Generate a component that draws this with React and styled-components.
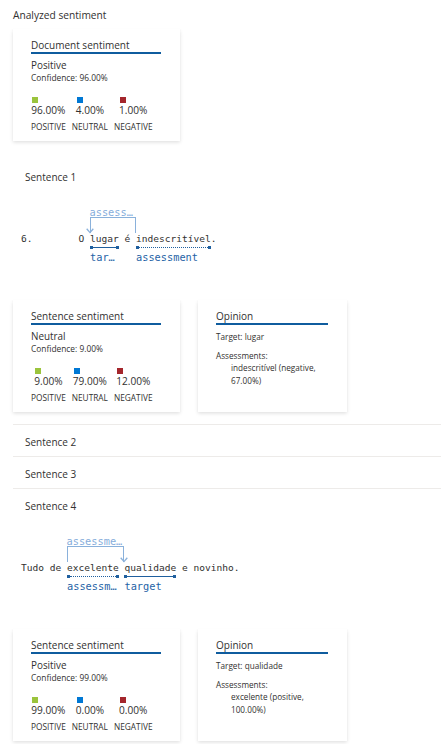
import React from 'react';
import styled, { createGlobalStyle } from 'styled-components';

const GlobalStyle = createGlobalStyle`
  body {
    margin: 0;
    background: #ffffff;
    color: #323130;
    font-family: "Open Sans", Lato, sans-serif;
    overflow: hidden;
  }
`;

const Page = styled.div`
  padding: 7px 0 0 13px;
`;

const PageTitle = styled.div`
  font-size: 10.2px;
  line-height: 16px;
`;

const Card = styled.div`
  box-sizing: border-box;
  width: ${props => props.$width}px;
  height: 112px;
  margin-top: ${props => props.$top || 0}px;
  padding: 9px 19px 8px 18px;
  background: #ffffff;
  box-shadow: 0 1.6px 3.6px rgba(0, 0, 0, 0.13), 0 0.3px 0.9px rgba(0, 0, 0, 0.11);
`;

const CardTitle = styled.div`
  font-size: 10px;
  line-height: 14px;
  border-bottom: 2px solid #0f5c9e;
`;

const Label = styled.div`
  margin-top: 4px;
  font-size: 9.9px;
  line-height: 14px;
`;

const Confidence = styled.div`
  font-size: 8.4px;
  line-height: 12px;
`;

const Scores = styled.div`
  display: flex;
  gap: 6px;
  margin-top: 13px;
`;

const ScoreCol = styled.div`
  display: flex;
  flex-direction: column;
  align-items: center;
`;

const ScoreValue = styled.div`
  display: flex;
  flex-direction: column;
  align-items: flex-start;
  font-size: 10.1px;
  line-height: 14px;
`;

const Swatch = styled.span`
  width: 6px;
  height: 6px;
  margin-left: 1px;
  background: ${props => props.$color};
`;

const ScoreName = styled.div`
  margin-top: 4px;
  font-size: 8.3px;
  line-height: 12px;
  text-transform: uppercase;
`;

const OpinionLine = styled.div`
  margin-top: ${props => props.$top}px;
  padding-left: ${props => (props.$indent ? 15 : 0)}px;
  font-size: 8.2px;
  line-height: 12.5px;
`;

const Sentences = styled.div`
  margin-top: 19px;
`;

const Item = styled.div`
  border-top: ${props => (props.$first ? 'none' : '1px solid #edebe9')};
`;

const ItemHeader = styled.div`
  height: 28px;
  padding: 3px 0 0 12px;
  font-size: 10px;
  line-height: 28px;
`;

const Panel = styled.div`
  padding-bottom: 12px;
`;

const AnnotLine = styled.div`
  padding: 41px 0 37px 8px;
  font-family: "DejaVu Sans Mono", monospace;
  font-size: 9.55px;
  line-height: 14px;
  color: #323130;
  white-space: pre;
`;

const Word = styled.span`
  display: inline-flex;
  flex-direction: column;
`;

const Bar = styled.span`
  display: flex;
  align-items: center;
  height: 3px;
  margin-bottom: 2px;
`;

const BarEnd = styled.span`
  width: 3px;
  height: 3px;
  background: #1f5f9e;
`;

const BarLine = styled.span`
  flex: 1;
  border-top: 1.2px ${props => (props.$dotted ? 'dotted' : 'solid')} #1f5f9e;
`;

const WordLabel = styled.span`
  width: 0;
  min-width: 100%;
  overflow: hidden;
  text-overflow: ellipsis;
  white-space: nowrap;
  font-size: 10.3px;
  line-height: 12px;
  color: #1f63a6;
`;

const ArcSpan = styled.span`
  position: relative;
  display: inline-block;
`;

const Arc = styled.span`
  position: absolute;
  left: 0;
  right: 0;
  top: -15px;
  height: 15px;
  border: 1.5px solid #8ab1db;
  border-bottom: none;
`;

const ArcLabel = styled.span`
  position: absolute;
  left: -1.5px;
  right: -1.5px;
  bottom: 100%;
  overflow: hidden;
  text-overflow: ellipsis;
  white-space: nowrap;
  font-size: 10.3px;
  line-height: 12px;
  color: #86addb;
`;

const ArrowHead = styled.svg`
  position: absolute;
  bottom: -1px;
  ${props => (props.$side === 'left' ? 'left: -5px;' : 'right: -5px;')}
`;

const CardsRow = styled.div`
  display: flex;
  gap: 18px;
`;

const AnnotatedWord = ({ text, label, dotted }) => (
  <Word>
    <span>{text}</span>
    <Bar>
      <BarEnd />
      <BarLine $dotted={dotted} />
      <BarEnd />
    </Bar>
    <WordLabel>{label}</WordLabel>
  </Word>
);

const Link = ({ label, target, children }) => (
  <ArcSpan>
    <Arc>
      <ArcLabel>{label}</ArcLabel>
      <ArrowHead $side={target} width="8" height="6" viewBox="0 0 8 6">
        <path d="M0.7 0.8 L4 4.6 L7.3 0.8" fill="none" stroke="#8ab1db" strokeWidth="1.3" />
      </ArrowHead>
    </Arc>
    {children}
  </ArcSpan>
);

const SentimentCard = ({ title, label, confidence, scores, top }) => (
  <Card $width={167} $top={top}>
    <CardTitle>{title}</CardTitle>
    <Label>{label}</Label>
    <Confidence>Confidence: {confidence}</Confidence>
    <Scores>
      {scores.map(s => (
        <ScoreCol key={s.name}>
          <ScoreValue>
            <Swatch $color={s.color} />
            <span>{s.value}</span>
          </ScoreValue>
          <ScoreName>{s.name}</ScoreName>
        </ScoreCol>
      ))}
    </Scores>
  </Card>
);

const OpinionCard = ({ target, assessment }) => (
  <Card $width={149}>
    <CardTitle>Opinion</CardTitle>
    <OpinionLine $top={6}>Target: {target}</OpinionLine>
    <OpinionLine $top={6}>Assessments:</OpinionLine>
    <OpinionLine $top={0} $indent>{assessment}</OpinionLine>
  </Card>
);

const colors = ['#9bc43c', '#0078d4', '#a4262c'];
const names = ['Positive', 'Neutral', 'Negative'];
const makeScores = values => values.map((value, i) => ({ name: names[i], value, color: colors[i] }));

const App = () => (
  <Page>
    <GlobalStyle />
    <PageTitle>Analyzed sentiment</PageTitle>
    <SentimentCard
      top={6}
      title="Document sentiment"
      label="Positive"
      confidence="96.00%"
      scores={makeScores(['96.00%', '4.00%', '1.00%'])}
    />

    <Sentences>
      <Item $first>
        <ItemHeader>Sentence 1</ItemHeader>
        <Panel>
          <AnnotLine>
            {'6.        O '}
            <Link label="assessment" target="left">
              <AnnotatedWord text="lugar" label="target" />
              {' é '}
            </Link>
            <AnnotatedWord text="indescritível" label="assessment" dotted />
            {'.'}
          </AnnotLine>
          <CardsRow>
            <SentimentCard
              title="Sentence sentiment"
              label="Neutral"
              confidence="9.00%"
              scores={makeScores(['9.00%', '79.00%', '12.00%'])}
            />
            <OpinionCard target="lugar" assessment="indescritível (negative, 67.00%)" />
          </CardsRow>
        </Panel>
      </Item>
      <Item>
        <ItemHeader>Sentence 2</ItemHeader>
      </Item>
      <Item>
        <ItemHeader>Sentence 3</ItemHeader>
      </Item>
      <Item>
        <ItemHeader>Sentence 4</ItemHeader>
        <Panel>
          <AnnotLine>
            {'Tudo de '}
            <Link label="assessment" target="right">
              <AnnotatedWord text="excelente" label="assessment" dotted />
              {' '}
            </Link>
            <AnnotatedWord text="qualidade" label="target" />
            {' e novinho.'}
          </AnnotLine>
          <CardsRow>
            <SentimentCard
              title="Sentence sentiment"
              label="Positive"
              confidence="99.00%"
              scores={makeScores(['99.00%', '0.00%', '0.00%'])}
            />
            <OpinionCard target="qualidade" assessment="excelente (positive, 100.00%)" />
          </CardsRow>
        </Panel>
      </Item>
    </Sentences>
  </Page>
);

export default App;
